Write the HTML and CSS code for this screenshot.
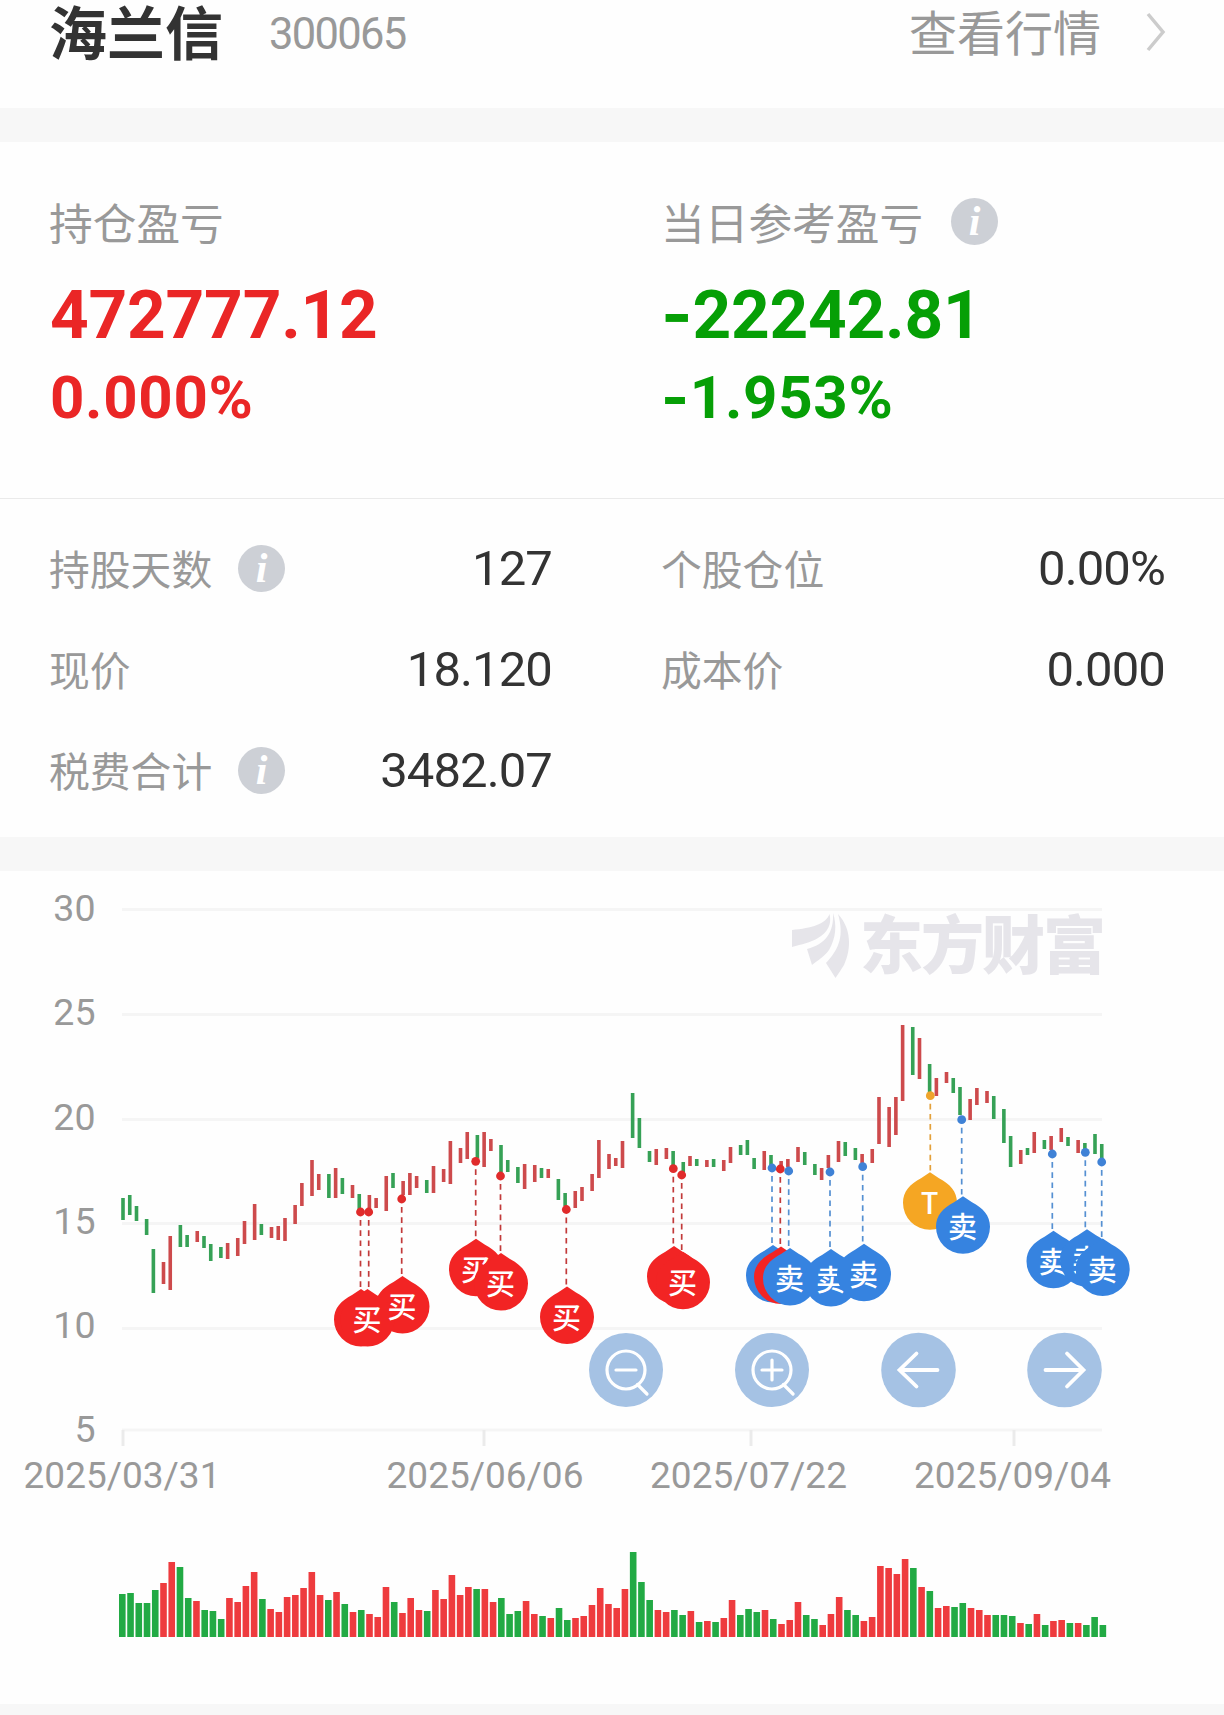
FILE: index.html
```html
<!DOCTYPE html>
<html lang="zh-CN">
  <head>
    <meta charset="UTF-8">
    <meta name="viewport" content="width=device-width, initial-scale=1.0">
    <title>海兰信 300065</title>
    <link rel="stylesheet" href="styles.css">
  </head>
  <body>
    <header class="header">
      <h1 class="name">海兰信</h1>
      <span class="code">300065</span>
      <a class="quote">查看行情</a>
      <svg class="chevron" viewBox="0 0 20 40"><path d="M2 2 L17 20 L2 38"/></svg>
    </header>

    <section class="summary">
      <div class="col">
        <p class="label">持仓盈亏</p>
        <p class="amount red">472777.12</p>
        <p class="percent red">0.000%</p>
      </div>
      <div class="col">
        <p class="label">当日参考盈亏 <span class="info">i</span></p>
        <p class="amount green"><span class="minus">-</span>22242.81</p>
        <p class="percent green"><span class="minus">-</span>1.953%</p>
      </div>
    </section>

    <section class="details">
      <div class="row"><span class="key">持股天数</span><span class="info">i</span><span class="value">127</span></div>
      <div class="row"><span class="key">个股仓位</span><span class="value">0.00%</span></div>
      <div class="row"><span class="key">现价</span><span class="value">18.120</span></div>
      <div class="row"><span class="key">成本价</span><span class="value">0.000</span></div>
      <div class="row"><span class="key">税费合计</span><span class="info">i</span><span class="value">3482.07</span></div>
    </section>

    <section class="chart">
      <svg id="chart" width="1224" height="833" viewBox="0 871 1224 833">
        <g class="grid">
          <path d="M122 909.5H1102M122 1014.5H1102M122 1119.5H1102M122 1223.5H1102M122 1328.5H1102M122 1430H1102"/>
          <path class="ticks" d="M123 1430V1446M484 1430V1446M751 1430V1446M1014 1430V1446"/>
        </g>
        <g class="axis-y">
          <text x="95.5" y="921">30</text>
          <text x="95.5" y="1025">25</text>
          <text x="95.5" y="1130">20</text>
          <text x="95.5" y="1234">15</text>
          <text x="95.5" y="1338">10</text>
          <text x="95.5" y="1442">5</text>
        </g>
        <g class="axis-x">
          <text x="122" y="1488">2025/03/31</text>
          <text x="485" y="1488">2025/06/06</text>
          <text x="748.5" y="1488">2025/07/22</text>
          <text x="1012.5" y="1488">2025/09/04</text>
        </g>
        <g class="watermark">
          <path d="M792 930C812 928 826 924 829.5 914C832 924 828 932 818 938C810 943 802 944 792 947Z"/>
          <path d="M807 949C826 944 834 932 833 913C837 925 836 938 829 950C824 957 818 960 812 965Z"/>
          <path d="M838 914C851 928 852 948 844 965C841 970 838 974 835.5 978L826 963C840 948 844 935 838 914Z"/>
          <text x="860" y="968" textLength="246">东方财富</text>
        </g>
        <g id="candles"></g>
        <g id="pins"></g>
        <g id="volumes"></g>
        <g class="btn" transform="translate(626 1370)">
          <circle class="disc" r="37"/>
          <circle r="19"/>
          <path d="M-10 0H10M11.5 14.5L21 24"/>
        </g>
        <g class="btn" transform="translate(772 1370)">
          <circle class="disc" r="37"/>
          <circle r="19"/>
          <path d="M-10 0H10M0 -10V10M11.5 14.5L21 24"/>
        </g>
        <g class="btn" transform="translate(918.5 1370)">
          <circle class="disc" r="37.3"/>
          <path class="arrow" d="M19 0H-18.5M-2 -16.5L-19 0L-2 16.5"/>
        </g>
        <g class="btn" transform="translate(1064.5 1370)">
          <circle class="disc" r="37.3"/>
          <path class="arrow" d="M-19 0H18.5M2.5 -16.5L19 0L2.5 16.5"/>
        </g>
      </svg>
    </section>
    <script src="script.js"></script>
  </body>
</html>
```

FILE: styles.css
```css
* {
    margin: 0;
    padding: 0;
    box-sizing: border-box;
}

body {
    width: 1224px;
    height: 1715px;
    overflow: hidden;
    background: #f7f7f7;
    color: #333;
    font-family: 'Noto Sans CJK SC', sans-serif;
}

.header {
    display: flex;
    align-items: center;
    height: 108px;
    padding: 0 58px 48px 49px;
    background: #fefefe;
}

.name {
    font-size: 58px;
    font-weight: 700;
    line-height: 60px;
}

.code {
    margin-left: 46px;
    padding-top: 9px;
    font-family: Roboto, sans-serif;
    font-size: 43.5px;
    letter-spacing: -1.7px;
    line-height: 60px;
    color: #999;
}

.quote {
    margin-left: auto;
    font-size: 48px;
    line-height: 56px;
    padding-bottom: 1px;
    color: #999;
}

.chevron {
    width: 20px;
    height: 40px;
    margin: 4px 0 0 45px;
    fill: none;
    stroke: #ccc;
    stroke-width: 3.5;
}

.summary {
    display: flex;
    height: 357px;
    margin-top: 34px;
    padding: 49px 0 0 50px;
    background: #fefefe;
    border-bottom: 1px solid #eaeaea;
}

.col {
    flex-shrink: 0;
    width: 612px;
}

.label {
    display: flex;
    align-items: center;
    margin-left: -1px;
    font-size: 43.7px;
    line-height: 60px;
    color: #999;
}

.amount, .percent {
    font-family: Roboto, sans-serif;
    font-weight: 700;
}

.minus {
    margin-left: -1px;
    font-family: Inter, sans-serif;
    line-height: 0;
}

.amount {
    margin-top: 24px;
    font-size: 67.5px;
    letter-spacing: -0.2px;
    line-height: 80px;
}

.percent {
    margin-top: 5px;
    font-size: 60px;
    letter-spacing: 0.7px;
    line-height: 76px;
}

.red {
    color: #ea2626;
}

.green {
    color: #069f06;
}

.info {
    width: 47px;
    height: 47px;
    margin-left: 28px;
    border-radius: 50%;
    background: #cdd0d6;
    color: #fff;
    font-family: 'Liberation Serif', serif;
    font-size: 42px;
    font-style: italic;
    font-weight: 700;
    line-height: 47px;
    text-align: center;
}

.details {
    display: grid;
    grid-template-columns: 503px 504px;
    grid-auto-rows: 101px;
    column-gap: 109px;
    height: 338px;
    padding: 19px 0 0 49px;
    background: #fefefe;
}

.row {
    display: flex;
    align-items: center;
}

.key {
    padding-bottom: 3px;
    font-size: 40.8px;
    color: #999;
}

.row .info {
    margin-left: 26px;
}

.value {
    margin-left: auto;
    font-family: Roboto, sans-serif;
    font-size: 49px;
    letter-spacing: -0.9px;
}

.chart {
    height: 833px;
    margin-top: 34px;
    background: #fefefe;
}

.chart svg {
    display: block;
}

.grid path {
    stroke: #f5f5f5;
    stroke-width: 3;
}

.grid .ticks {
    stroke: #ebebeb;
}

.axis-y, .axis-x {
    font-family: Roboto, sans-serif;
    font-size: 37.5px;
    fill: #999;
}

.axis-y {
    text-anchor: end;
}

.axis-x {
    font-size: 37px;
    text-anchor: middle;
}

.watermark {
    fill: #e6e5ea;
    font-size: 63px;
    font-weight: 900;
}

.up {
    fill: #cd4a4c;
}

.down {
    fill: #36a156;
}

#volumes .up {
    fill: #ee3b3e;
}

#volumes .down {
    fill: #22aa44;
}

.pin line {
    stroke-width: 1.7;
    stroke-dasharray: 5.7 4.5;
}

.pin text {
    font-size: 29px;
    font-weight: 500;
    text-anchor: middle;
    fill: #fff;
}

.buy path { fill: #f22424; }
.buy circle { fill: #e02b2b; }
.buy line { stroke: #c23a3a; }

.sell path { fill: #3683e0; }
.sell circle { fill: #3f82d6; }
.sell line { stroke: #5590d2; }

.both path { fill: #f5a623; }
.both circle { fill: #efa42c; }
.both line { stroke: #e3a03a; }

.btn circle, .btn path {
    fill: none;
    stroke: #fff;
    stroke-width: 3.2;
    stroke-linecap: round;
}

.btn .arrow {
    stroke-width: 3.8;
}

.btn .disc {
    fill: #a5c2e4;
    stroke: none;
}
```

FILE: script.js
```js
// direction, high y, low y, volume height
const days = [
  ["d",1198,1220,43],["d",1195,1215,44],["d",1206,1221,34],["d",1219,1235,34],["d",1249,1293,47],
  ["u",1262,1284,54],["u",1236,1290,75],["d",1225,1247,70],["d",1235,1247,39],["u",1231,1242,36],
  ["d",1236,1248,27],["d",1244,1261,26],["d",1247,1258,18],["u",1243,1259,39],["u",1238,1256,35],
  ["u",1221,1244,51],["u",1204,1240,65],["d",1224,1235,38],["u",1227,1238,28],["u",1226,1240,25],
  ["u",1218,1241,40],["u",1205,1224,42],["u",1183,1206,49],["u",1160,1196,65],["u",1174,1190,42],
  ["d",1174,1198,37],["u",1168,1198,45],["d",1178,1194,33],["u",1185,1198,25],["d",1194,1210,27],
  ["u",1195,1210,23],["u",1198,1208,20],["u",1176,1211,50],["d",1173,1188,35],["u",1181,1195,24],
  ["u",1173,1195,39],["u",1176,1188,27],["d",1180,1193,26],["u",1166,1193,47],["u",1169,1182,38],
  ["u",1141,1184,62],["u",1148,1163,42],["u",1132,1159,50],["d",1135,1158,48],["u",1132,1167,48],
  ["u",1139,1151,35],["d",1145,1172,39],["d",1160,1172,23],["d",1167,1183,26],["u",1164,1189,36],
  ["u",1165,1182,23],["d",1168,1178,21],["u",1169,1178,19],["d",1179,1200,29],["d",1193,1206,17],
  ["u",1191,1208,19],["u",1187,1201,21],["u",1174,1191,32],["u",1140,1178,49],["u",1154,1169,33],
  ["u",1158,1166,29],["u",1141,1168,48],["d",1093,1138,85],["d",1118,1148,55],["d",1151,1162,37],
  ["u",1149,1165,27],["u",1148,1159,25],["d",1151,1167,27],["d",1162,1172,22],["u",1156,1166,26],
  ["d",1159,1166,15],["u",1160,1167,16],["d",1159,1167,15],["u",1160,1171,19],["u",1147,1163,37],
  ["d",1145,1155,22],["d",1140,1155,28],["d",1158,1169,25],["u",1151,1170,27],["d",1155,1165,18],
  ["u",1161,1166,13],["u",1159,1167,17],["u",1147,1162,35],["d",1152,1165,22],["d",1164,1175,18],
  ["u",1168,1180,12],["u",1155,1168,23],["u",1141,1162,40],["d",1142,1156,27],["d",1148,1160,22],
  ["u",1154,1163,16],["u",1149,1163,20],["u",1097,1144,71],["u",1107,1147,69],["u",1097,1135,63],
  ["u",1025,1101,78],["d",1027,1075,69],["u",1038,1079,50],["d",1064,1092,46],["u",1078,1096,29],
  ["u",1072,1083,31],["d",1078,1093,30],["d",1087,1115,34],["u",1099,1120,29],["u",1088,1105,27],
  ["u",1091,1103,22],["d",1096,1119,22],["d",1109,1143,22],["d",1136,1167,21],["u",1150,1164,14],
  ["d",1148,1155,13],["u",1132,1153,23],["d",1140,1149,12],["u",1136,1150,16],["u",1128,1142,17],
  ["d",1137,1146,14],["u",1140,1153,14],["d",1143,1149,12],["d",1134,1154,20],["d",1144,1158,12]
];
// type, dot x, dot y, pin x, pin tip y, label
// a pin that lies under its neighbour has no label
const trades = [
  ["buy", 360.5, 1212, 361, 1289, ""],
  ["buy", 401.7, 1199, 402.5, 1276, "买"],
  ["buy", 368.7, 1212, 367.5, 1289, "买"],
  ["buy", 475.7, 1161.3, 476, 1238.7, "买"],
  ["buy", 500.5, 1176, 501, 1253, "买"],
  ["buy", 566.3, 1209.5, 567, 1286.5, "买"],
  ["buy", 673.3, 1168.7, 674, 1246, ""],
  ["buy", 681.7, 1175, 683, 1251.7, "买"],
  ["sell", 772, 1168, 773, 1245, ""],
  ["buy", 780.3, 1169, 781, 1246.5, ""],
  ["sell", 788.7, 1171, 790, 1248, "卖"],
  ["sell", 830, 1172, 831, 1249, "卖"],
  ["sell", 862.7, 1166.7, 864, 1243.7, "卖"],
  ["both", 930.3, 1095.7, 930, 1172.3, "T"],
  ["sell", 961.7, 1119.7, 963, 1196.3, "卖"],
  ["sell", 1052.3, 1154, 1053.5, 1230.7, "卖"],
  ["sell", 1085.3, 1152.3, 1087, 1229.3, "卖"],
  ["sell", 1101.7, 1162, 1102.7, 1238.5, "卖"]
];

let candles = "";
let volumes = "";
days.forEach(([dir, top, bottom, vol], i) => {
  const cls = dir == "u" ? "up" : "down";
  // candles snap to a coarse grid, volume bars do not
  const x = 121.2 + Math.floor(i * 2.44 + 0.1) * 3.375;
  candles += `<rect class="${cls}" x="${x}" y="${top}" width="3.6" height="${bottom - top}"/>`;
  volumes += `<rect class="${cls}" x="${119 + i * 8.24}" y="${1637 - vol}" width="6.6" height="${vol}"/>`;
});

let pins = "";
trades.forEach(([type, x, y, px, tip, label], i) => {
  const shape = `<line x1="${x}" y1="${y + 8}" x2="${x}" y2="${tip}"/>
    <circle cx="${x}" cy="${y}" r="4.4"/>
    <path transform="translate(${px} ${tip})" d="M0 0L9 6C20 12 27 19 27 30.5A27 27 0 0 1 -27 30.5C-27 19 -20 12 -9 6Z"/>`;
  const text = label ? `<text x="${px - 0.5}" y="${tip + 42}">${label}</text>` : "";
  if (i == 1) {
    // this label sits over the next pin's edge
    pins += `<g class="pin ${type}">${shape}</g>`;
  } else {
    pins += `<g class="pin ${type}">${shape}${text}</g>`;
  }
  if (i == 2) {
    const [t, , , cx, cy, name] = trades[1];
    pins += `<g class="pin ${t}"><text x="${cx - 0.5}" y="${cy + 42}">${name}</text></g>`;
  }
});

document.getElementById("candles").innerHTML = candles;
document.getElementById("volumes").innerHTML = volumes;
document.getElementById("pins").innerHTML = pins;
```
